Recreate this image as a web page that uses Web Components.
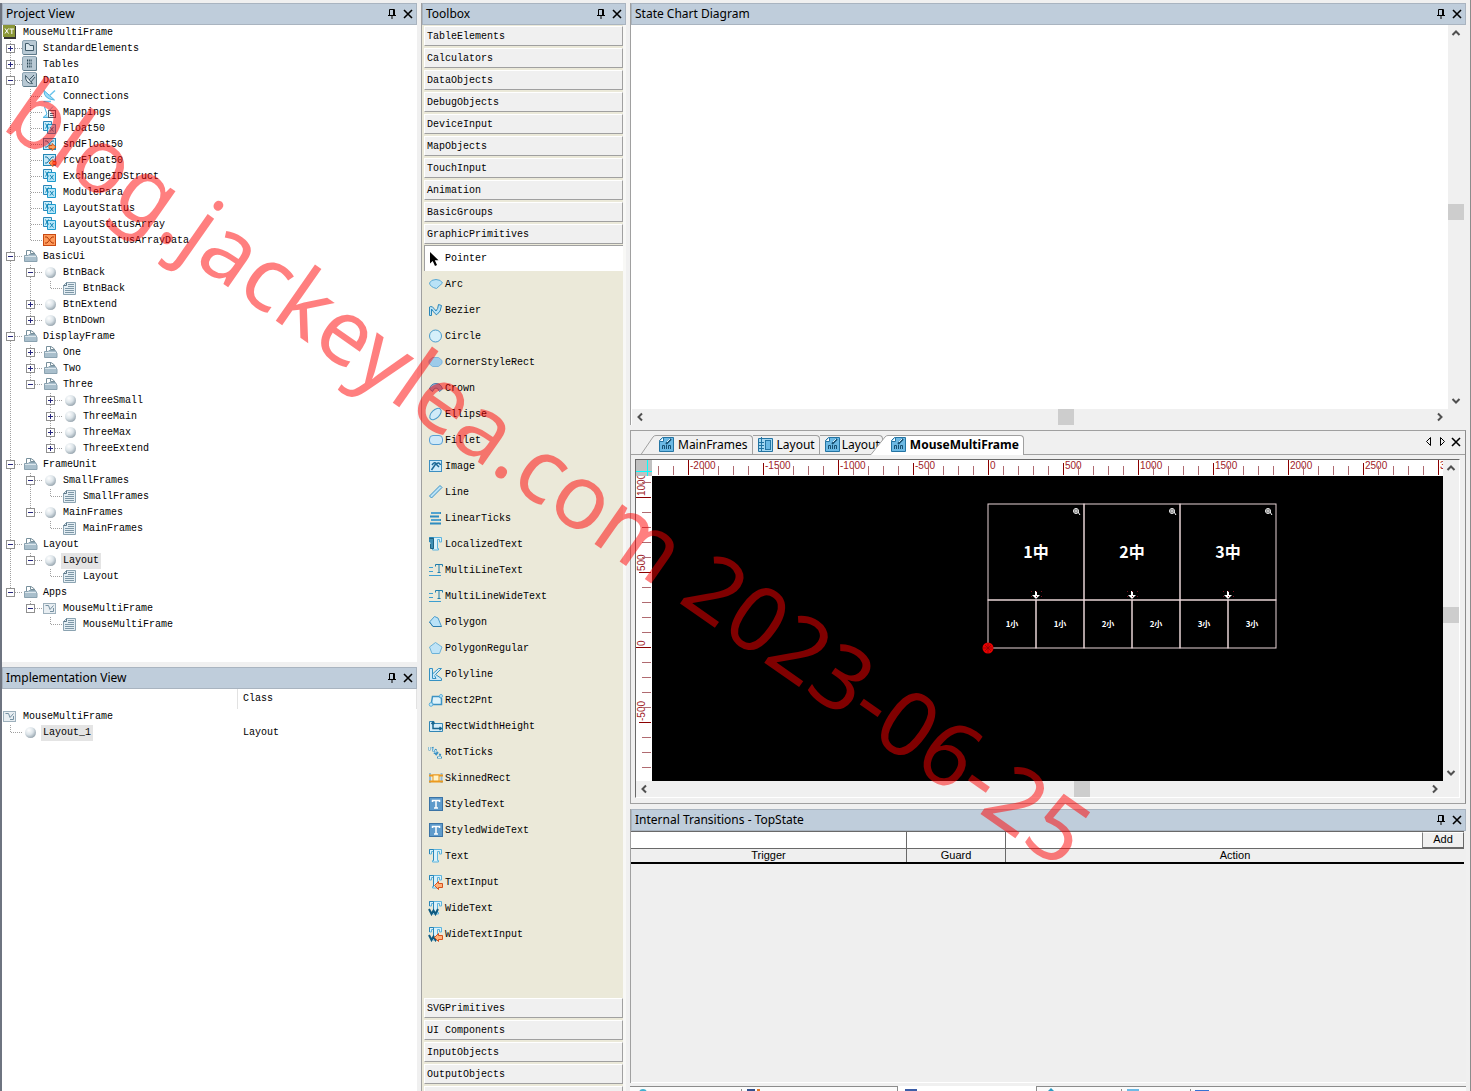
<!DOCTYPE html>
<html lang="en">
<head>
<meta charset="utf-8">
<title>MouseMultiFrame</title>
<style>
  html, body {
    height: 100%;
    margin: 0;
  }

  body {
    background: #f0f0f0;
    color: #000;
    font: 12px/16px "Noto Sans", sans-serif;
    overflow: hidden;
    --mono: "Liberation Mono", monospace;
    --title: #bfcddb;
    --line: #a0a0a0;
    --face: #f0f0f0;
  }
</style>
</head>
<body>
<ide-workspace>
  <dock-panel slot="project" heading="Project View"><tree-view id="project"></tree-view></dock-panel>
  <dock-panel slot="implementation" heading="Implementation View"><implementation-view></implementation-view></dock-panel>
  <dock-panel slot="toolbox" heading="Toolbox"><tool-box></tool-box></dock-panel>
  <dock-panel slot="chart" heading="State Chart Diagram"><state-chart></state-chart></dock-panel>
  <frame-editor slot="editor"></frame-editor>
  <dock-panel slot="transitions" heading="Internal Transitions - TopState"><transition-table></transition-table></dock-panel>
  <bottom-tabs slot="tabs"></bottom-tabs>
</ide-workspace>
<water-mark>blog.jackeylea.com 2023-06-25</water-mark>

<script>
// Icons, all drawn on a 16 x 16 grid
const B = '#2a86b8'; // outline blue
const L = '#b9e2f7'; // light fill
const tee = '<path d="M1.500 1.500H13.500V6H11.500V3.500H9.500V12.500H10.500V14H4.500V12.500H5.500V3.500H3.500V6H1.500Z" fill="#d9f1fb" stroke="#5db4dd"/><path d="M1.500 6V1.500H5.500V12.500" fill="none" stroke="#2a86b8"/>';
const arrowIn = '<path d="M6.500 11.500L10.500 7.500V9.500H14.500V13.500H10.500V15.500Z" fill="#ffb27a" stroke="#d8501c"/>';
const wide = '<path d="M1 9L3.500 14L5.500 10.500L7.500 14L10 9" fill="none" stroke="#0e5a80" stroke-width="2"/>';
const box = (inner) => `<rect x=".5" y=".5" width="14" height="14" rx="1.500" fill="#b8c9d4" stroke="#8ea5b3"/><path d="M1.500 14.500H14.500V1.500" fill="none" stroke="#5f7b8a"/>${inner}`;
const styled = '<rect x="1.500" y="1.500" width="13" height="13" fill="#5f9bcb" stroke="#3b73a5"/><path d="M4.500 6V4.500H11.500V6M8 4.500V12M6 12H10" fill="none" stroke="#fff" stroke-width="1.500"/>';
const struct = `<path d="M1.500 1.500H9.500V10.500H1.500Z" fill="#c8edfa" stroke="${B}"/><path d="M5.500 4.500H13.500V13.500H5.500Z" fill="#b5e5f8" stroke="#1d9bcd"/><path d="M3.500 3.500L6.500 8.500M6.500 3.500L3.500 8.500M8 7L11.500 11.500M11.500 7L8 11.500" stroke="#1384b5" fill="none"/>`;
const flow = '<rect x="1.500" y="2.500" width="12" height="11" fill="#c5e9f8" stroke="#2387b5"/><path d="M3 5H5L10 11H12M3 11H5L10 5H12" fill="none" stroke="#1776a5"/>';
const multi = '<path d="M1 5.500H5M1 9.500H5M1 13.500H13" stroke="#3d9fd0"/><path d="M7.500 4.500V2.500H14.500V4.500M11 2.500V10.500M9.500 10.500H12.500" fill="none" stroke="#1e7cab"/>';
const ICONS = {
  project: '<path d="M2 2H14V15H2Z" fill="#333"/><rect x="1" y="1" width="12" height="12" fill="#8a9637"/><path d="M3 4.500L6.500 9.500M6.500 4.500L3 9.500M7.500 5H12M9.800 5V10" stroke="#fff" fill="none"/>',
  elements: box('<path d="M3.500 3.500H6.500L8 5.500H11.500V10.500H3.500Z" fill="#dde8ee" stroke="#3f5a69"/>'),
  tables: box('<path d="M5 4.500H10M5 7.500H10M5 10.500H10" stroke="#274452" stroke-width="2" stroke-dasharray="1 .8"/>'),
  dataio: box('<path d="M3.500 3.500Q3 11.500 10.500 11.500L7 7.500Z" fill="#e9f1f5" stroke="#3f5a69"/><path d="M7 8L12 3M9 10L13 5" stroke="#3f5a69"/>'),
  dish: '<path d="M2 2.500Q1.500 11 12.500 12L7 7Z" fill="#9bdcf8" stroke="#4db4e2"/><path d="M7 8L13 2.500M1.500 13.500H9" stroke="#6cc4ec" stroke-width="1.500"/>',
  mapping: '<path d="M2.500 3L5 10L1 13.500H6" fill="#9bdcf8" stroke="#4db4e2"/><path d="M6 8L11 2.500" stroke="#6cc4ec"/><rect x="6.500" y="6.500" width="7" height="7" fill="#eef3f6" stroke="#4b6170"/><path d="M8 9.500H12M8 11.500H12" stroke="#4b6170"/>',
  struct,
  snd: flow + '<path d="M7 9.500H10V7.500L14 11L10 14.500V12.500H7Z" fill="#ffa45c" stroke="#c9571d"/>',
  rcv: flow + '<path d="M14 9.500H11V7.500L7 11L11 14.500V12.500H14Z" fill="#ffa45c" stroke="#c9571d"/>',
  data: '<rect x="1.500" y="2.500" width="12" height="11" fill="#ff9a5a" stroke="#c94a12"/><path d="M3 5H5L10 11H12M3 11H5L10 5H12" fill="none" stroke="#b03a08"/>',
  folder: '<path d="M4.500 8V2.500H9L12.500 5V8" fill="#fff" stroke="#78909c"/><path d="M8.500 2.500V5.500H12" fill="none" stroke="#78909c"/><path d="M2.500 7.500H6L7 6.500H13.500L15 9.500V13.500H2.500Z" fill="#a9bfcc" stroke="#8aa2b0"/><path d="M3 8.500H14" stroke="#dce7ed"/>',
  ball: '<defs><radialGradient id="g" cx=".35" cy=".3" r=".8"><stop offset="0" stop-color="#fff"/><stop offset=".5" stop-color="#dbe3e8"/><stop offset="1" stop-color="#8b9aa4"/></radialGradient></defs><circle cx="8.500" cy="8.500" r="5.500" fill="url(#g)"/>',
  page: '<path d="M4.500 2.500H13.500V14.500H1.500V5.500Z" fill="#e3edf3" stroke="#8ba3b1"/><path d="M4.500 2.500V5.500H1.500" fill="none" stroke="#5b7788"/><path d="M6 4.500H12M6 6.500H12M3 8.500H12M3 10.500H12M3 12.500H12" stroke="#7d97a6"/>',
  app: '<rect x="1.500" y="3.500" width="12" height="10" fill="#e8eef2" stroke="#9db0bc"/><path d="M3.500 5.500H6.500L8 9.500L11.500 5.500M8 11.500H11.500V8" fill="none" stroke="#7590a1"/>',
  pointer: '<path d="M2 1V12.500L4.700 10L7 15L9 14L6.800 9.300H10.500Z" fill="#000"/>',
  arc: `<path d="M1.500 7Q3 3.500 8 3.500T14.500 7L8.500 12.500Q2 11 1.500 7Z" fill="${L}" stroke="#5aa9d4"/>`,
  bezier: `<path d="M1.500 5V13.500H3.500V7Q8 13.500 9 12.500Q13 10 13.500 3.500L10.500 2.500Q10 7 8 9Q4 3 1.500 5Z" fill="${L}" stroke="${B}"/>`,
  circle: '<circle cx="7.500" cy="8" r="6" fill="#d6effa" stroke="#4b9ccb"/>',
  corner: '<path d="M4.500 3.500H10.500L14 6.500V9.500L10.500 12.500H4.500L1 9.500V6.500Z" fill="#9ccbea" stroke="#7db5dc"/>',
  crown: '<path d="M1.500 9Q3 3.500 8 3.500T14.500 9L11.500 11.500Q10 8 8 8T4.500 11.500Z" fill="#8db8de" stroke="#4c7fae"/>',
  ellipse: '<ellipse cx="7.500" cy="8" rx="7" ry="4" transform="rotate(-45 7.500 8)" fill="#d0ebf8" stroke="#4b9ccb"/>',
  fillet: '<rect x="1.500" y="3.500" width="13" height="9" rx="3.500" fill="#cfe9f8" stroke="#5aa1d6"/>',
  image: '<rect x="1.500" y="2.500" width="12" height="11" fill="#cdeafa" stroke="#3c8fc2"/><path d="M3.500 12L8 5.500M4 7Q7 3 8.500 6Q11 3.500 12.500 7M8 6L11 9" fill="none" stroke="#1c6896" stroke-width="1.500"/>',
  line: `<path d="M1.500 12L12 1.500L14 3.500L3.500 14Z" fill="${L}" stroke="#3d93c4"/>`,
  ticks: '<path d="M3 3H13M2 6.500H11M3 10H13M2 13.500H13" stroke="#2f8cc0" stroke-width="2"/><path d="M3 3H12M3 10H12" stroke="#a9dcf5" stroke-width=".6"/>',
  localized: tee + '<path d="M1.500 2.500H5.500V12.500H2.500V8" fill="#3f8fb4" stroke="#1d6383"/>',
  multi,
  polygon: `<path d="M1.500 8L6.500 2.500L10 4L13.500 12.500H5Z" fill="${L}" stroke="#4b9ccb"/><path d="M1.500 8L5 12.500H13.500" fill="none" stroke="#2c7cad"/>`,
  pentagon: '<path d="M7.500 2.500L14 7L11.500 13.500H4L1.500 7Z" fill="#bfe3f6" stroke="#6cb2d8"/>',
  polyline: '<path d="M1.500 2.500H4.500V8L10.500 2.500H13.500L7.500 8.500L13.500 12.500V14.500H1.500Z" fill="#cdeafa" stroke="#3591c2"/><path d="M4.500 8V12.500H8L6.500 9.500" fill="none" stroke="#3591c2"/>',
  rect2: '<path d="M4.500 4.500H11L13.500 6.500V12.500H5L3.500 10.500Z" fill="#dff3fb" stroke="#3d93c4" stroke-width="1.500"/><circle cx="3" cy="12.500" r="1.800" fill="#c7e9f8" stroke="#5cb0dc"/><circle cx="13" cy="4" r="1.500" fill="#c7e9f8" stroke="#5cb0dc"/>',
  rectwh: '<path d="M1.500 3.500H6V5.500H14.500V13.500H1.500Z" fill="#d5edf9" stroke="#3186b5"/><path d="M5 4V10.500H13M3.500 6L5 4L6.500 6M11.500 9L13.500 10.500L11.500 12" fill="none" stroke="#17658f" stroke-width="1.500"/>',
  rot: '<path d="M1.500 3V6.500M4.500 3L5.500 7.500M8 5L6.500 10M10 8L7.500 11M9 13.500H14M11 10.500L13 11" stroke="#3d93c4" stroke-width="2"/><path d="M1.500 3V6M5 4L5.500 7M7.500 6L7 9M10 13.500H13" stroke="#d6effa"/>',
  skin: '<path d="M2 3V13M13.500 3V13" stroke="#8fbbdc" stroke-width="2"/><path d="M1 5.500H15M1 11.500H15" stroke="#eb9a1e" stroke-width="2"/><rect x="5" y="5" width="6" height="6" fill="#fff3c9" stroke="#eb9a1e"/>',
  styled,
  text: tee,
  textinput: tee + arrowIn,
  wide: tee + wide,
  wideinput: tee + wide + arrowIn,
  form: '<path d="M1.500 4.500L4.500 1.500H15.500V15.500H1.500Z" fill="#6cb9e4" stroke="#2474a3"/><path d="M1.500 5.500H5.500V1.500" fill="#fff" stroke="#2474a3"/><path d="M4.500 13V9.500H6.500V13M8.500 9V13M10.500 13V9.500H12.500V13" stroke="#175072"/><path d="M8 8L13 3" stroke="#175072" stroke-width="2"/><path d="M9 6L12 3" stroke="#d6effa"/>',
  layout: '<path d="M1.500 2.500H15.500V15.500H1.500Z" fill="#a5d8f2" stroke="#2474a3"/><path d="M4.500 1V15M1.500 6.500H7M1.500 9.500H7M1.500 12.500H7" stroke="#2474a3"/><rect x="8.500" y="4.500" width="5" height="9" fill="#6cb9e4" stroke="#2474a3"/>'
};

/** Opens a shadow root on the element and fills it with markup. */
const shadow = (el, html) => {
  el.attachShadow({ mode: 'open' }).innerHTML = html;
  return el.shadowRoot;
};

class IdeIcon extends HTMLElement {
  connectedCallback() {
    if (this.shadowRoot) return;
    shadow(this, `
      <style>
        :host { display: block; flex: none; height: 16px; width: 16px; }
        svg { display: block; }
      </style>
      <svg width="16" height="16" viewBox="0 0 16 16" fill="none" aria-hidden="true">${ICONS[this.getAttribute('name')]}</svg>`);
  }
}

class IdeWorkspace extends HTMLElement {
  constructor() {
    super();
    shadow(this, `
      <style>
        :host {
          box-sizing: border-box;
          display: grid;
          column-gap: 4px;
          grid-template-columns: 417px 205px minmax(0, 1fr);
          height: 100vh;
          padding: 3px 4px 0 0;
          border-right: 1px solid #8c8c8c;
        }
        .col { display: flex; flex-direction: column; min-height: 0; min-width: 0; }
        .left { border-left: 2px solid #6e7480; background: #fff; }
        .left ::slotted([slot="project"]) { flex: 659 1 0; border-bottom: 5px solid var(--face); }
        .left ::slotted([slot="implementation"]) { flex: 424 1 0; }
        .mid ::slotted(*) { flex: 1; border-left: 1px solid var(--line); }
        .right { gap: 5px; }
        .right ::slotted([slot="chart"]) { flex: 423 1 0; border-left: 1px solid var(--line); }
        .right ::slotted([slot="editor"]) { flex: 372 1 0; }
        .right ::slotted([slot="transitions"]) { flex: 275 1 0; border-left: 1px solid var(--line); }
      </style>
      <div class="col left"><slot name="project"></slot><slot name="implementation"></slot></div>
      <div class="col mid"><slot name="toolbox"></slot></div>
      <div class="col right">
        <slot name="chart"></slot><slot name="editor"></slot><slot name="transitions"></slot><slot name="tabs"></slot>
      </div>`);
  }
}

// Docked panel: caption with pin and close buttons, content in the slot
class DockPanel extends HTMLElement {
  constructor() {
    super();
    shadow(this, `
      <style>
        :host { display: flex; flex-direction: column; min-height: 0; min-width: 0; box-sizing: border-box; }
        header {
          align-items: center;
          background: var(--title);
          border: 1px solid #a9b4c0;
          box-sizing: border-box;
          display: flex;
          flex: none;
          height: 22px;
          padding: 0 0 0 3px;
        }
        h2 { flex: 1; font-size: 12px; font-weight: normal; margin: 0; }
        button { background: none; border: 0; height: 18px; padding: 0; width: 16px; }
        svg { display: block; }
        ::slotted(*) { flex: 1; min-height: 0; }
      </style>
      <header>
        <h2></h2>
        <button aria-label="Pin"><svg width="16" height="16" fill="none" stroke="#000"><path d="M5.500 9V3.500H10.500V9M9.500 4V9M4 9.500H12M8 10V13"/></svg></button>
        <button aria-label="Close"><svg width="16" height="16" fill="none" stroke="#000" stroke-width="1.600"><path d="M4 4L12 12M12 4L4 12"/></svg></button>
      </header>
      <slot></slot>`);
  }

  connectedCallback() {
    this.shadowRoot.querySelector('h2').textContent = this.getAttribute('heading');
  }
}

/**
 * Tree with dotted guides. Each node is [label, icon, children, selected]
 * where children is an array, 'closed' for a collapsed branch, or nothing.
 */
class TreeView extends HTMLElement {
  constructor() {
    super();
    shadow(this, `
      <style>
        :host { background: #fff; display: block; font: 10px/16px var(--mono); overflow: hidden; }
        .row { display: flex; height: 16px; }
        .row svg { display: block; flex: none; }
        ide-icon { margin-top: -1px; }
        .label { margin-left: 3px; padding: 0 2px; white-space: pre; }
        .selected { background: #e4e4e4; }
      </style>
      <div role="tree"></div>`);
  }

  set data(nodes) {
    const rootEl = this.shadowRoot.querySelector('div');
    rootEl.innerHTML = '';
    nodes.forEach((node, i) => this.addNode(rootEl, node, [], i < nodes.length - 1));
  }

  addNode(parentEl, [label, icon, children, selected], guides) {
    const rowEl = document.createElement('div');
    rowEl.className = 'row';
    rowEl.setAttribute('role', 'treeitem');
    rowEl.innerHTML = guides.map((g, i) => this.guide(g, i === guides.length - 1, children)).join('') +
      `<ide-icon name="${icon}"></ide-icon><span class="label${selected ? ' selected' : ''}">${label}</span>`;
    parentEl.append(rowEl);
    if (Array.isArray(children)) {
      children.forEach((child, i) => {
        this.addNode(parentEl, child, [...guides, i < children.length - 1]);
      });
    }
  }

  guide(line, own, children) {
    let d = '';
    if (line) d += 'M8.500 0V16';
    else if (own) d += 'M8.500 0V8';
    if (own) d += 'M9 7.500H20';
    let boxEl = '';
    if (own && children) {
      boxEl = `<rect x="4.500" y="3.500" width="8" height="8" fill="#fff" stroke="#8f8f8f"/>
        <path d="M6 7.500H11${children === 'closed' ? 'M8.500 5V10' : ''}" stroke="#26267e"/>`;
    }
    return `<svg width="20" height="16" fill="none"><path d="${d}" stroke="#a0a0a0" stroke-dasharray="1 1"/>${boxEl}</svg>`;
  }
}

class ImplementationView extends HTMLElement {
  constructor() {
    super();
    const root = shadow(this, `
      <style>
        :host { background: #fff; display: grid; font: 10px/16px var(--mono); grid-template-columns: 235px 1fr; grid-template-rows: 20px auto; }
        .head { border-left: 1px solid #e2e2e2; border-right: 1px solid #e2e2e2; line-height: 20px; padding-left: 5px; }
        .class { padding: 16px 0 0 6px; }
      </style>
      <div></div><div class="head">Class</div>
      <tree-view></tree-view><div class="class">Layout</div>`);
    root.querySelector('tree-view').data = [
      ['MouseMultiFrame', 'app', [['Layout_1', 'ball', null, true]]]
    ];
  }
}

class ToolBox extends HTMLElement {
  constructor() {
    super();
    const above = ['TableElements', 'Calculators', 'DataObjects', 'DebugObjects', 'DeviceInput',
      'MapObjects', 'TouchInput', 'Animation', 'BasicGroups', 'GraphicPrimitives'];
    const below = ['SVGPrimitives', 'UI Components', 'InputObjects', 'OutputObjects', ''];
    const tools = [['Pointer', 'pointer'], ['Arc', 'arc'], ['Bezier', 'bezier'], ['Circle', 'circle'],
      ['CornerStyleRect', 'corner'], ['Crown', 'crown'], ['Ellipse', 'ellipse'], ['Fillet', 'fillet'],
      ['Image', 'image'], ['Line', 'line'], ['LinearTicks', 'ticks'], ['LocalizedText', 'localized'],
      ['MultiLineText', 'multi'], ['MultiLineWideText', 'multi'], ['Polygon', 'polygon'],
      ['PolygonRegular', 'pentagon'], ['Polyline', 'polyline'], ['Rect2Pnt', 'rect2'],
      ['RectWidthHeight', 'rectwh'], ['RotTicks', 'rot'], ['SkinnedRect', 'skin'], ['StyledText', 'styled'],
      ['StyledWideText', 'styled'], ['Text', 'text'], ['TextInput', 'textinput'], ['WideText', 'wide'],
      ['WideTextInput', 'wideinput']];
    const group = (name) => `<button class="group">${name}</button>`;
    shadow(this, `
      <style>
        :host { background: #ebe9d9; border-right: 3px solid #f8f8f6; box-sizing: border-box; display: flex; flex-direction: column; overflow: hidden; }
        button { border: 0; flex: none; font: 10px/16px var(--mono); padding: 0; text-align: left; }
        .group {
          background: var(--face);
          border: 1px solid var(--line);
          border-color: #fff var(--line) var(--line) #fff;
          box-sizing: border-box;
          height: 20px;
          margin: 1px 0 1px 2px;
          padding: 2px 0 0 2px;
        }
        .tools { display: flex; flex: 1 1 0; flex-direction: column; min-height: 0; }
        .tool { align-items: center; background: none; display: flex; gap: 1px; height: 26px; padding-left: 6px; }
        .tool span { padding-top: 2px; }
        .tool:first-child { background: #fff; border: 1px solid var(--line); border-width: 1px 0 0 1px; margin: 0 0 0 2px; padding-left: 3px; box-sizing: border-box; }
        .tool:first-child span { padding-top: 0; }
        .below { display: flex; flex: none; flex-direction: column; height: 94px; overflow: hidden; }
      </style>
      ${above.map(group).join('')}
      <div class="tools">
        ${tools.map(([name, icon]) => `<button class="tool"><ide-icon name="${icon}"></ide-icon><span>${name}</span></button>`).join('')}
      </div>
      <div class="below">${below.map(group).join('')}</div>`);
  }
}

// Scroll bar; "at" is the share of the track before the thumb, in thousandths
class ScrollBar extends HTMLElement {
  connectedCallback() {
    if (this.shadowRoot) return;
    const vertical = this.hasAttribute('vertical');
    const at = this.getAttribute('at');
    const arrow = (d) => `<svg width="16" height="16" fill="none" stroke="#505050" stroke-width="2"><path d="${d}"/></svg>`;
    shadow(this, `
      <style>
        :host { background: var(--face); display: flex; flex-direction: ${vertical ? 'column' : 'row'}; ${vertical ? 'width' : 'height'}: 16px; }
        button { background: none; border: 0; flex: none; height: 16px; padding: 0; width: 16px; }
        svg { display: block; }
        .before { flex: ${at} 0 0; }
        .thumb { background: #cdcdcd; flex: none; height: 16px; width: 16px; }
        .after { flex: ${1000 - at} 0 0; }
      </style>
      <button aria-label="Scroll back">${arrow(vertical ? 'M4.500 10L8 6.500L11.500 10' : 'M10 4.500L6.500 8L10 11.500')}</button>
      <div class="before"></div><div class="thumb"></div><div class="after"></div>
      <button aria-label="Scroll forward">${arrow(vertical ? 'M4.500 6L8 9.500L11.500 6' : 'M6 4.500L9.500 8L6 11.500')}</button>`);
  }
}

class StateChart extends HTMLElement {
  constructor() {
    super();
    shadow(this, `
      <style>
        :host { border-left: 1px solid #fff; display: grid; grid-template: minmax(0, 1fr) 16px / minmax(0, 1fr) 17px; margin-right: 1px; }
        .page { background: #fff; }
      </style>
      <div class="page"></div><scroll-bar vertical at="485"></scroll-bar><scroll-bar at="534"></scroll-bar>`);
  }
}

class EditorTabs extends HTMLElement {
  constructor() {
    super();
    shadow(this, `
      <style>
        :host { border-bottom: 1px solid var(--line); display: flex; height: 19px; padding: 4px 1px 0 10px; }
        button { background: none; border: 0; font: 12px/18px "Noto Sans", sans-serif; padding: 0; }
        .tab {
          background: var(--face);
          border: 1px solid var(--line);
          border-width: 1px 1px 0 0;
          border-top-right-radius: 4px;
          box-sizing: border-box;
          display: flex;
          gap: 4px;
          height: 19px;
          padding: 0 4px;
        }
        .slant { flex: none; }
        .slant + .tab { padding-left: 2px; }
        .tab.clipped { gap: 2px; padding: 0 2px 0 4px; }
        .active-slant { margin-left: -12px; z-index: 1; }
        .active { background: #fff; font-weight: bold; height: 20px; margin-bottom: -1px; z-index: 1; }
        .fill { flex: 1; }
        .tool { height: 16px; margin-top: -1px; width: 14px; }
      </style>
      <svg class="slant" width="15" height="20"><path d="M0 19.500L12 2Q13 .5 15 .5" fill="none" stroke="#a0a0a0"/></svg>
      <button class="tab"><ide-icon name="form"></ide-icon>MainFrames</button>
      <button class="tab"><ide-icon name="layout"></ide-icon>Layout</button>
      <button class="tab clipped"><ide-icon name="form"></ide-icon>Layout</button>
      <svg class="slant active-slant" width="17" height="20"><path d="M0 19.500L14 2Q15 .5 17 .5V20H0Z" fill="#fff"/><path d="M0 19.500L14 2Q15 .5 17 .5" fill="none" stroke="#a0a0a0"/></svg>
      <button class="tab active"><ide-icon name="form"></ide-icon>MouseMultiFrame</button>
      <div class="fill"></div>
      <button class="tool" aria-label="Previous tab"><svg width="14" height="16" fill="none" stroke="#000"><path d="M8.500 3.500V11.500L4.500 7.500Z"/></svg></button>
      <button class="tool" aria-label="Next tab"><svg width="14" height="16" fill="none" stroke="#000"><path d="M4.500 3.500V11.500L8.500 7.500Z"/></svg></button>
      <button class="tool" aria-label="Close tab"><svg width="14" height="16" fill="none" stroke="#000" stroke-width="1.600"><path d="M2 4L10 12M10 4L2 12"/></svg></button>`);
  }
}

// Ruler with a tick every 100 units (15px) and a label every 500
class RulerScale extends HTMLElement {
  connectedCallback() {
    if (this.shadowRoot) return;
    const vertical = this.hasAttribute('vertical');
    const zero = Number(this.getAttribute('zero'));
    const from = Number(this.getAttribute('from'));
    const to = Number(this.getAttribute('to'));
    let marks = '';
    for (let unit = from; unit <= to; unit += 100) {
      const p = vertical ? zero - unit * 0.15 : zero + unit * 0.15;
      const start = unit % 1000 === 0 ? 0 : unit % 500 === 0 ? 3 : 6;
      const stroke = unit % 500 === 0 ? '#8b0000' : '#b06a70';
      marks += vertical
        ? `<path d="M${start} ${p}.500H15" stroke="${stroke}"/>`
        : `<path d="M${p}.500 ${start}V15" stroke="${stroke}"/>`;
      if (unit % 500 === 0) {
        marks += vertical
          ? `<text transform="translate(9 ${p - 1}) rotate(-90)">${unit}</text>`
          : `<text x="${p + 2}" y="9">${unit}</text>`;
      }
    }
    shadow(this, `
      <style>
        :host { background: #fff; display: block; overflow: hidden; }
        svg { display: block; height: 100%; width: 100%; }
        text { fill: #a01c28; font: 10px "Liberation Sans", sans-serif; }
      </style>
      <svg>${marks}</svg>`);
  }
}

// The frame layout: three large frames over six small ones
class FrameCanvas extends HTMLElement {
  constructor() {
    super();
    const x0 = 336, y0 = 28, big = 96, small = 48;
    let art = '';
    for (let i = 0; i < 3; i++) {
      const x = x0 + i * big;
      art += `<rect x="${x}" y="${y0}" width="${big}" height="${big}"/>
        <text class="big" x="${x + 48}" y="${y0 + 54}">${i + 1}中</text>
        <g stroke="#fff"><circle cx="${x + 88}" cy="${y0 + 7}" r="2.500"/><path d="M${x + 90} ${y0 + 8}L${x + 92} ${y0 + 11}M${x + 86} ${y0 + 7}H${x + 90}M${x + 88} ${y0 + 5}V${y0 + 9}"/></g>
        <path d="M${x + 48} ${y0 + 87}V${y0 + 91}" stroke="#fff" stroke-width="2"/>
        <path d="M${x + 44} ${y0 + 91}H${x + 52}L${x + 48} ${y0 + 95}Z" fill="#fff" stroke="none"/>
        <path d="M${x + 43} ${y0 + 87}.500H${x + 55}M${x + 43} ${y0 + 92}.500H${x + 55}" stroke="#7a1020" stroke-dasharray="1 4"/>`;
    }
    for (let i = 0; i < 6; i++) {
      const x = x0 + i * small;
      art += `<rect x="${x}" y="${y0 + big}" width="${small}" height="${small}"/>
        <text class="small" x="${x + 24}" y="${y0 + 123}">${Math.floor(i / 2) + 1}小</text>`;
    }
    shadow(this, `
      <style>
        :host { background: #000; display: block; overflow: hidden; }
        svg { display: block; height: 100%; width: 100%; }
        text { fill: #fff; font-family: "Noto Sans CJK SC", sans-serif; font-weight: bold; stroke: none; text-anchor: middle; }
        .big { font-size: 16px; }
        .small { font-size: 8px; }
      </style>
      <svg fill="none" stroke="#e8d4d6">
        ${art}
        <circle cx="336" cy="172" r="5.500" fill="#e60000" stroke="none"/>
        <path d="M331 172H341M336 167V177M333 169L339 175M339 169L333 175" stroke="#8a0000" stroke-width=".7"/>
      </svg>`);
  }
}

class FrameEditor extends HTMLElement {
  constructor() {
    super();
    shadow(this, `
      <style>
        :host { border: 1px solid var(--line); border-right-color: #8c8c8c; box-sizing: border-box; display: flex; flex-direction: column; min-height: 0; }
        .view {
          border: 1px solid #fff;
          border-color: #696969 #fff #fff #696969;
          display: grid;
          flex: 1;
          grid-template: 16px minmax(0, 1fr) 16px / 16px minmax(0, 1fr) 16px;
          margin: 4px 5px 5px 4px;
          min-height: 0;
        }
        .corner { background: #c0c0c0; }
        .corner svg { display: block; }
        .down { grid-row: 1 / 3; grid-column: 3; }
        .across { grid-row: 3; grid-column: 1 / 3; }
      </style>
      <editor-tabs></editor-tabs>
      <div class="view">
        <div class="corner"><svg width="16" height="16" fill="none"><path d="M0 11.500H16M11.500 0V16" stroke="#00ffff"/></svg></div>
        <ruler-scale zero="336" from="-2200" to="3000"></ruler-scale>
        <scroll-bar class="down" vertical at="480"></scroll-bar>
        <ruler-scale vertical zero="171" from="-800" to="1100"></ruler-scale>
        <frame-canvas></frame-canvas>
        <scroll-bar class="across" at="556"></scroll-bar>
      </div>`);
  }
}

class TransitionTable extends HTMLElement {
  constructor() {
    super();
    shadow(this, `
      <style>
        :host { background: #efefef; border-bottom: 1px solid #fff; display: block; padding-right: 2px; }
        table { border-bottom: 2px solid #000; border-collapse: separate; border-spacing: 0; font: 11px/13px "Liberation Sans", sans-serif; table-layout: fixed; width: 100%; }
        td, th { border-right: 1px solid #696969; border-top: 1px solid #696969; box-sizing: border-box; font-weight: normal; padding: 0; }
        td:last-child, th:last-child { border-right: 0; }
        td { background: #fff; height: 17px; }
        th { height: 14px; }
        input { border: 0; box-sizing: border-box; display: block; height: 15px; min-width: 0; padding: 0; width: 100%; }
        .entry { display: flex; }
        button { background: var(--face); border: 1px solid; border-color: #fff #696969 #696969 #808080; flex: none; font: inherit; height: 16px; padding: 0; width: 42px; }
      </style>
      <table>
        <colgroup><col style="width: 276px"><col style="width: 99px"><col></colgroup>
        <tr>
          <td><input aria-label="Trigger"></td>
          <td><input aria-label="Guard"></td>
          <td><div class="entry"><input aria-label="Action"><button>Add</button></div></td>
        </tr>
        <tr><th>Trigger</th><th>Guard</th><th>Action</th></tr>
      </table>`);
  }
}

// Tab strip cut off by the window's lower edge
class BottomTabs extends HTMLElement {
  constructor() {
    super();
    shadow(this, `
      <style>
        :host { display: grid; grid-template-columns: 267px 140px 1fr; height: 5px; margin-top: -2px; overflow: hidden; }
        div { background: #fbfbfb; border-top: 1px solid #8c8c8c; }
        .active { border: 1px solid #8c8c8c; border-width: 0 1px; background: #fff; padding-top: 1px; }
        svg { display: block; }
      </style>
      <div><svg width="267" height="5"><circle cx="13" cy="6" r="4" fill="#3fb0d0"/><path d="M111.500 2V5" stroke="#8c8c8c"/><rect x="117" y="2" width="8" height="4" fill="#33518f"/><rect x="127" y="2" width="3" height="3" fill="#e27828"/></svg></div>
      <div class="active"><svg width="138" height="5"><rect x="7" y="2" width="12" height="4" fill="#3d5ea8"/></svg></div>
      <div><svg width="420" height="5"><path d="M10 5L14 1L18 5Z" fill="#2c9bc4"/><rect x="90" y="2" width="12" height="4" fill="#6dbbe6"/><path d="M84.500 2V5M153.500 2V5" stroke="#8c8c8c"/><rect x="158" y="3" width="14" height="3" fill="#3672d4"/></svg></div>`);
  }
}

class WaterMark extends HTMLElement {
  constructor() {
    super();
    shadow(this, `
      <style>
        :host {
          color: rgba(255, 0, 0, .5);
          font: 90px/90px "Noto Sans", sans-serif;
          left: 2px;
          pointer-events: none;
          position: absolute;
          top: 48px;
          transform: rotate(35deg);
          transform-origin: 0 76px;
          white-space: nowrap;
        }
      </style>
      <slot></slot>`);
  }
}

customElements.define('ide-icon', IdeIcon);
customElements.define('ide-workspace', IdeWorkspace);
customElements.define('dock-panel', DockPanel);
customElements.define('tree-view', TreeView);
customElements.define('implementation-view', ImplementationView);
customElements.define('tool-box', ToolBox);
customElements.define('scroll-bar', ScrollBar);
customElements.define('state-chart', StateChart);
customElements.define('editor-tabs', EditorTabs);
customElements.define('ruler-scale', RulerScale);
customElements.define('frame-canvas', FrameCanvas);
customElements.define('frame-editor', FrameEditor);
customElements.define('transition-table', TransitionTable);
customElements.define('bottom-tabs', BottomTabs);
customElements.define('water-mark', WaterMark);

document.getElementById('project').data = [
  ['MouseMultiFrame', 'project', [
    ['StandardElements', 'elements', 'closed'],
    ['Tables', 'tables', 'closed'],
    ['DataIO', 'dataio', [
      ['Connections', 'dish'],
      ['Mappings', 'mapping'],
      ['Float50', 'struct'],
      ['sndFloat50', 'snd'],
      ['rcvFloat50', 'rcv'],
      ['ExchangeIDStruct', 'struct'],
      ['ModulePara', 'struct'],
      ['LayoutStatus', 'struct'],
      ['LayoutStatusArray', 'struct'],
      ['LayoutStatusArrayData', 'data']
    ]],
    ['BasicUi', 'folder', [
      ['BtnBack', 'ball', [['BtnBack', 'page']]],
      ['BtnExtend', 'ball', 'closed'],
      ['BtnDown', 'ball', 'closed']
    ]],
    ['DisplayFrame', 'folder', [
      ['One', 'folder', 'closed'],
      ['Two', 'folder', 'closed'],
      ['Three', 'folder', [
        ['ThreeSmall', 'ball', 'closed'],
        ['ThreeMain', 'ball', 'closed'],
        ['ThreeMax', 'ball', 'closed'],
        ['ThreeExtend', 'ball', 'closed']
      ]]
    ]],
    ['FrameUnit', 'folder', [
      ['SmallFrames', 'ball', [['SmallFrames', 'page']]],
      ['MainFrames', 'ball', [['MainFrames', 'page']]]
    ]],
    ['Layout', 'folder', [
      ['Layout', 'ball', [['Layout', 'page']], true]
    ]],
    ['Apps', 'folder', [
      ['MouseMultiFrame', 'app', [['MouseMultiFrame', 'page']]]
    ]]
  ]]
];
</script>
</body>
</html>
